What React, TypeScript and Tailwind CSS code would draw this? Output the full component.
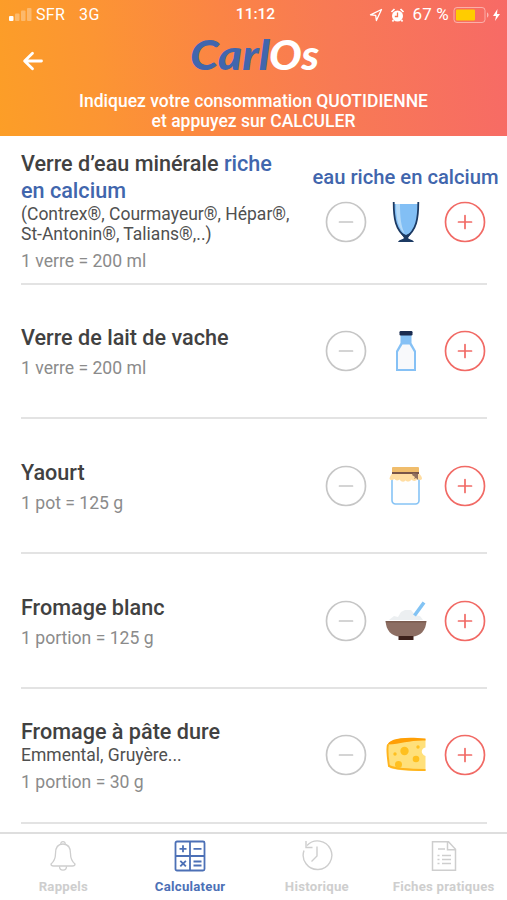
import type { ReactNode } from "react";

interface Food {
  id: string;
  title: ReactNode;
  note?: ReactNode;
  portion: string;
  label?: string;
  icon: ReactNode;
}

const GlassIcon = () => (
  <svg width="42" height="42" viewBox="0 0 42 42">
    <path d="M9 3h24c0 16-2 27-12 34C11 30 9 19 9 3z" fill="#82bff5" />
    <path d="M11 3h4c0 13 1 23 5 30C13 27 11 17 11 3z" fill="#b5daf8" />
    <path d="M8.7 1C8.7 18 10.5 29 21 36.5C31.500 29 33.300 18 33.300 1" fill="none" stroke="#1c3a63" strokeWidth="1.8" />
    <path d="M15 31l6 3 6-3-4 6c1 1.500 5 1.500 6 4H13c1-2.500 5-2.500 6-4z" fill="#1c3a63" />
  </svg>
);

const BottleIcon = () => (
  <svg width="42" height="42" viewBox="0 0 42 42">
    <path d="M15.500 4h11v9l4.500 8v20h-20V21l4.500-8z" fill="#86c1f5" />
    <path d="M17.500 14.500h7L29 22v17H13V22z" fill="#f8f9fb" />
    <rect x="14.500" y="1" width="13" height="4.500" rx="1.200" fill="#192b50" />
  </svg>
);

const JarIcon = () => (
  <svg width="42" height="42" viewBox="0 0 42 42">
    <path d="M7 11v24.500a3.500 3.500 0 0 0 3.500 3.500h20a3.500 3.500 0 0 0 3.500-3.500V11" fill="#fefefe" stroke="#86c3f5" strokeWidth="1.600" />
    <rect x="7" y="2" width="27" height="6" rx="1" fill="#f0bd6c" />
    <path d="M7 8.500h27c2 2 3 3.500 3 5.500-1.500 2-3.500.5-4.500 0-2 3-5 2-6 .5-2 3-5 2-6 1-2 2-4 1.500-6-1-2 1.500-4 1-5-.5-2 1.500-4 1.500-5 0 0-2 1.500-4 2.500-5.500z" fill="#ffdda2" />
    <path d="M7 7h27v2H7z" fill="#795548" />
    <path d="M28 8l5 1v6l-2-2-2 1 1-2-3-2z" fill="#90705f" />
  </svg>
);

const BowlIcon = () => (
  <svg width="42" height="42" viewBox="0 0 42 42">
    <path d="M4 20l5-4 4 1 3-5 4-2 6 0 4 5 5 1 3 4z" fill="#eceff1" />
    <path d="M29.500 15.500L39 2.500" stroke="#82c3f4" strokeWidth="3.500" />
    <path d="M.7 21h40.600c0 9-6 15.500-14 15.500H14.700C6.700 36.500.7 30 .7 21z" fill="#8d6e63" />
    <path d="M.7 21h40.600v1.500H.7z" fill="#7c5c50" />
    <path d="M13.500 36h15v4h-15z" fill="#3e211b" />
  </svg>
);

const CheeseIcon = () => (
  <svg width="42" height="42" viewBox="0 0 42 42">
    <path d="M2 12C4 5 15 3 40.500 5v8.500c-5 1-5 7 0 8.500V37C28 37 15 37 5 34z" fill="#ffe07a" />
    <path d="M2 12C4 5 15 2.500 40.500 4.500v2C25 6 16 10 3 10.500z" fill="#ff9f05" />
    <path d="M3 10.500C1.500 15 3 25 4 32c8 3.500 22 4 36.500 4" fill="none" stroke="#ffb41d" strokeWidth="2" />
    <g fill="#ffc01f">
      <circle cx="19.500" cy="17" r="4.200" />
      <circle cx="31" cy="25" r="3.300" />
      <circle cx="13.500" cy="30.500" r="3.500" />
      <circle cx="33" cy="13" r="1.700" />
      <circle cx="10" cy="20" r="1.700" />
    </g>
  </svg>
);

const foods: Food[] = [
  {
    id: "eau",
    title: (
      <>
        Verre d’eau minérale <span className="text-[#4166ad]">riche<br />en calcium</span>
      </>
    ),
    note: (
      <>
        (Contrex®, Courmayeur®, Hépar®,
        <br />
        St-Antonin®, Talians®,..)
      </>
    ),
    portion: "1 verre = 200 ml",
    label: "eau riche en calcium",
    icon: <GlassIcon />,
  },
  { id: "lait", title: "Verre de lait de vache", portion: "1 verre = 200 ml", icon: <BottleIcon /> },
  { id: "yaourt", title: "Yaourt", portion: "1 pot = 125 g", icon: <JarIcon /> },
  { id: "blanc", title: "Fromage blanc", portion: "1 portion = 125 g", icon: <BowlIcon /> },
  { id: "dure", title: "Fromage à pâte dure", note: "Emmental, Gruyère...", portion: "1 portion = 30 g", icon: <CheeseIcon /> },
];

function RoundButton({ plus }: { plus?: boolean }) {
  return (
    <button className={plus ? "text-[#f16a65]" : "text-[#c6c6c6]"} aria-label={plus ? "Ajouter" : "Retirer"}>
      <svg width="42" height="42" viewBox="0 0 42 42" fill="none" stroke="currentColor" strokeWidth="1.700">
        <circle cx="21" cy="21" r="19.500" />
        <path d={plus ? "M14.500 21h13M21 14.500v13" : "M14.500 21h13"} strokeLinecap="round" />
      </svg>
    </button>
  );
}

function FoodRow({ food }: { food: Food }) {
  return (
    <li
      className={`mr-5 ml-[21px] flex shrink-0 items-center justify-between border-b-2 border-[#e3e3e3] ${
        food.label ? "h-[148.6px]" : "h-[134.8px]"
      }`}
    >
      <div className={`whitespace-nowrap ${food.label ? "mt-0.5" : ""}`}>
        <h2 className="text-[21.6px] leading-[27px] font-medium text-[#414141]">{food.title}</h2>
        {food.note && <p className="text-[17.5px] leading-5 text-[#505050]">{food.note}</p>}
        <p className="mt-[7px] text-[17.6px] leading-5 text-[#8b8b8b]">{food.portion}</p>
      </div>
      <div className={`mr-px flex w-[161px] flex-col items-center ${food.label ? "-mt-3" : ""}`}>
        {food.label && (
          <p className="mb-2.5 text-[20.2px] leading-[27px] font-medium whitespace-nowrap text-[#4166ad]">{food.label}</p>
        )}
        <div className="flex w-full items-center justify-between">
          <RoundButton />
          {food.icon}
          <RoundButton plus />
        </div>
      </div>
    </li>
  );
}

function StatusBar() {
  return (
    <div className="flex h-[30px] items-center justify-between pr-1.5 pl-2 text-[16px]">
      <div className="flex w-[160px] items-center tracking-[0.3px]">
        <svg width="25" height="16" viewBox="0 0 25 16" fill="#fff">
          <rect x="1" y="9" width="4.500" height="5" rx="1" />
          <g opacity=".3">
            <rect x="7" y="6.500" width="4.500" height="7.500" rx="1" />
            <rect x="13" y="3.500" width="4.500" height="10.500" rx="1" />
            <rect x="19" y="1" width="4.500" height="13" rx="1" />
          </g>
        </svg>
        <span className="ml-[3px]">SFR</span>
        <span className="ml-3.5">3G</span>
      </div>
      <span className="ml-0.5 text-[15.5px] font-medium">11:12</span>
      <div className="flex w-[160px] items-center justify-end tracking-[0.2px]">
        <svg width="14" height="14" viewBox="0 0 14 14" fill="none" stroke="#fff" strokeWidth="1.300" strokeLinejoin="round">
          <path d="M12.500 1.500L1.500 6.800l5.200.5.700 5.200z" />
        </svg>
        <svg className="ml-[7px]" width="15" height="15" viewBox="0 0 15 15">
          <circle cx="7.500" cy="8" r="5.500" fill="#fff" />
          <path d="M1.500 4l3-3M13.500 4l-3-3M3.500 12L2.500 13.500M11.500 12l1 1.500" stroke="#fff" strokeWidth="1.700" />
          <path d="M7.500 4.500V8.500H4.800" fill="none" stroke="#f9774f" strokeWidth="1.300" />
        </svg>
        <span className="ml-[7px] text-[17px] whitespace-nowrap">67 %</span>
        <svg className="ml-1" width="37" height="18" viewBox="0 0 37 18">
          <rect x="1" y="1.500" width="31" height="15" rx="3" fill="none" stroke="#fff" strokeOpacity=".45" />
          <rect x="3" y="3.500" width="19" height="11" rx="1" fill="#ffcc00" />
          <path d="M34 6.500c2 .5 2 4.500 0 5z" fill="#fff" opacity=".5" />
        </svg>
        <svg className="ml-0.5" width="9" height="14" viewBox="0 0 9 14">
          <path d="M5.500 1L1 8h3l-1 5 5-7H5z" fill="#fff" />
        </svg>
      </div>
    </div>
  );
}

function Header() {
  return (
    <header className="h-[136px] shrink-0 bg-[linear-gradient(83deg,#fc9e27_0%,#fc9533_20%,#fb8445_45%,#f87a54_65%,#f76a66_100%)] text-white">
      <StatusBar />
      <div className="flex h-[60px] items-center justify-between px-[21px]">
        <svg width="24" height="24" viewBox="0 0 24 24" fill="none" stroke="#fff" strokeWidth="2.800" strokeLinecap="round" strokeLinejoin="round">
          <path d="M20.500 13H4M11.500 5.200L3.600 13l7.900 7.800" />
        </svg>
        {/* wordmark */}
        <svg width="134" height="60" viewBox="0 0 134 60" fontFamily="Lato, sans-serif" fontSize="41" fontWeight="900" fontStyle="italic">
          <text x="3" y="40" textLength="80" lengthAdjust="spacingAndGlyphs" fill="#4166ad">Carl</text>
          <text x="82" y="40" textLength="50" lengthAdjust="spacingAndGlyphs" fill="#fff">Os</text>
        </svg>
        <div className="w-6" />
      </div>
      <p className="pt-px text-center text-[17.5px] leading-5 font-medium">
        Indiquez votre consommation QUOTIDIENNE
        <br />
        et appuyez sur CALCULER
      </p>
    </header>
  );
}

const tabs = [
  {
    label: "Rappels",
    icon: (
      <svg width="34" height="34" viewBox="0 0 34 34" fill="none" stroke="currentColor" strokeWidth="1.300" strokeLinejoin="round">
        <path d="M17 5c-5.500 0-7.500 4.500-7.500 9.500 0 5.500-1.500 8-4.500 10.500 0 1.500 1 2 2.500 2h19c1.500 0 2.500-.5 2.500-2-3-2.500-4.500-5-4.500-10.500C24.500 9.500 22.500 5 17 5z" />
        <path d="M14.800 5.300C14.300 1.700 19.700 1.700 19.200 5.300M13.500 27.200c0 5.200 7 5.200 7 0" />
      </svg>
    ),
  },
  {
    label: "Calculateur",
    active: true,
    icon: (
      <svg width="34" height="34" viewBox="0 0 34 34" fill="none" stroke="currentColor" strokeWidth="1.800">
        <rect x="2.500" y="2.500" width="29" height="29" rx="1.500" />
        <path d="M17 2.500v29M2.500 17h29" />
        <path d="M6.500 9.800h7M10 6.300v7M20.500 9.800h8M7.300 21.800l5.600 5.600M12.900 21.800l-5.600 5.600M20.500 22.500h8M20.500 26.500h8" />
      </svg>
    ),
  },
  {
    label: "Historique",
    icon: (
      <svg width="34" height="34" viewBox="0 0 34 34" fill="none" stroke="currentColor" strokeWidth="1.400">
        <path d="M7 6.500A14.300 14.300 0 1 1 4 11.500" />
        <path d="M6 2v6.500h6.500M17 7.500V17l-5.500 5.500" />
      </svg>
    ),
  },
  {
    label: "Fiches pratiques",
    icon: (
      <svg width="34" height="34" viewBox="0 0 34 34" fill="none" stroke="currentColor" strokeWidth="1.500">
        <path d="M5.500 2.700h16l7 7.500v21h-23zM20.500 2.700v8h8" />
        <path d="M11 10h7M15 16.500h9M15 20.500h9M15 24.500h9M10.500 16.500h2M10.500 20.500h2M10.500 24.500h2" />
      </svg>
    ),
  },
];

export default function App() {
  return (
    <div className="flex h-[900px] w-[507px] flex-col overflow-hidden bg-white font-[Roboto,sans-serif]">
      <Header />
      <ul className="flex min-h-0 flex-1 flex-col overflow-hidden">
        {foods.map((food) => (
          <FoodRow key={food.id} food={food} />
        ))}
      </ul>
      <nav className="grid h-[68px] shrink-0 grid-cols-4 border-t-2 border-[#dedede]">
        {tabs.map((tab) => (
          <button
            key={tab.label}
            className={`flex flex-col items-center pt-[5px] ${tab.active ? "text-[#4c70b6]" : "text-[#cecece]"}`}
          >
            {tab.icon}
            <span className="mt-1 text-[13.2px] leading-5 font-bold tracking-[0.25px] whitespace-nowrap">{tab.label}</span>
          </button>
        ))}
      </nav>
    </div>
  );
}
